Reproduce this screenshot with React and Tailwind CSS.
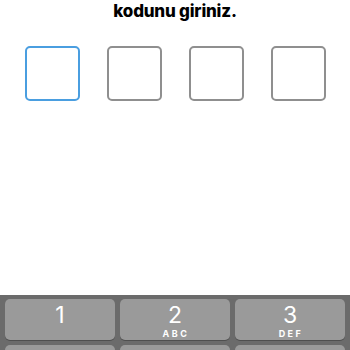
import React from 'react';

const keys = [
    { num: '1', sub: '' },
    { num: '2', sub: 'ABC' },
    { num: '3', sub: 'DEF' },
];

export default function App() {
    return (
        <div className="w-[350px] h-[350px] bg-white overflow-hidden flex flex-col font-['Inter',sans-serif]">
            <div className="text-center text-[17px] font-extrabold text-black leading-[20px] pt-[1px] tracking-[-0.2px]">
                kodunu giriniz.
            </div>

            <div className="flex gap-[27px] pl-[25px] mt-[25px]">
                <div className="w-[55px] h-[55px] rounded-[5px] border-2 border-[#4a9ee0]"></div>
                <div className="w-[55px] h-[55px] rounded-[5px] border-2 border-[#8f8f8f]"></div>
                <div className="w-[55px] h-[55px] rounded-[5px] border-2 border-[#8f8f8f]"></div>
                <div className="w-[55px] h-[55px] rounded-[5px] border-2 border-[#8f8f8f]"></div>
            </div>

            <div className="mt-auto h-[55px] bg-[#6b6b6b] px-[5px] pt-[4px] grid grid-cols-3 gap-x-[5px] gap-y-[5px] content-start">
                {keys.map((k) => (
                    <div key={k.num} className="h-[41px] rounded-[5px] bg-[#9a9a9a] shadow-[0_1px_0_#4f4f4f] flex flex-col items-center pt-[5px] text-white">
                        <span className="text-[23px] leading-[22px] font-normal">{k.num}</span>
                        {k.sub && <span className="mt-[3px] text-[9px] leading-[9px] font-bold tracking-[2.5px] pl-[2px]">{k.sub}</span>}
                    </div>
                ))}
                <div className="h-[41px] rounded-[5px] bg-[#9a9a9a]"></div>
                <div className="h-[41px] rounded-[5px] bg-[#9a9a9a]"></div>
                <div className="h-[41px] rounded-[5px] bg-[#9a9a9a]"></div>
            </div>
        </div>
    );
}
